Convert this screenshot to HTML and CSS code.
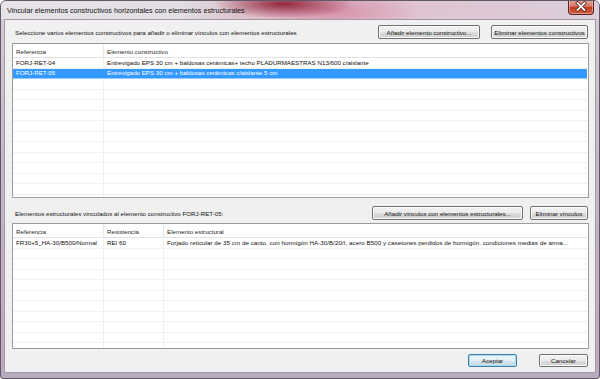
FILE: index.html
```html
<!DOCTYPE html>
<html>
<head>
<meta charset="utf-8">
<link rel="stylesheet" href="styles.css">
</head>
<body>
<div class="window">
  <div class="titlebar">
    <span class="title">Vincular elementos constructivos horizontales con elementos estructurales</span>
    <div class="close">
      <svg width="26" height="15" viewBox="0 0 26 15">
        <path d="M9.5 4 L16.5 11 M16.5 4 L9.5 11" stroke="#5a1010" stroke-width="3.2" stroke-linecap="square"/>
        <path d="M9.5 4 L16.5 11 M16.5 4 L9.5 11" stroke="#ffffff" stroke-width="1.8" stroke-linecap="square"/>
      </svg>
    </div>
  </div>
  <div class="client">
    <div class="row toprow">
      <span class="label">Seleccione varios elementos constructivos para añadir o eliminar vínculos con elementos estructurales</span>
      <div class="btns">
        <button class="btn w-add">Añadir elemento constructivo...</button>
        <button class="btn w-del">Eliminar elementos constructivos</button>
      </div>
    </div>
    <div class="list list1">
      <div class="lrow head">
        <div class="cell c1">Referencia</div>
        <div class="cell cx">Elemento constructivo</div>
      </div>
      <div class="lrow">
        <div class="cell c1">FORJ-RET-04</div>
        <div class="cell cx">Entrevigado EPS 30 cm + baldosas cerámicas+ techo PLADURMAESTRAS N13/600 c/aislante</div>
      </div>
      <div class="lrow sel">
        <div class="cell c1">FORJ-RET-05</div>
        <div class="cell cx">Entrevigado EPS 30 cm + baldosas cerámicas c/aislante 5 cm</div>
      </div>
      <div class="lrow"><div class="cell c1"></div><div class="cell cx"></div></div>
      <div class="lrow"><div class="cell c1"></div><div class="cell cx"></div></div>
      <div class="lrow"><div class="cell c1"></div><div class="cell cx"></div></div>
      <div class="lrow"><div class="cell c1"></div><div class="cell cx"></div></div>
      <div class="lrow"><div class="cell c1"></div><div class="cell cx"></div></div>
      <div class="lrow"><div class="cell c1"></div><div class="cell cx"></div></div>
      <div class="lrow"><div class="cell c1"></div><div class="cell cx"></div></div>
      <div class="lrow"><div class="cell c1"></div><div class="cell cx"></div></div>
      <div class="lrow"><div class="cell c1"></div><div class="cell cx"></div></div>
      <div class="lrow"><div class="cell c1"></div><div class="cell cx"></div></div>
      <div class="lrow"><div class="cell c1"></div><div class="cell cx"></div></div>
      <div class="lrow"><div class="cell c1"></div><div class="cell cx"></div></div>
    </div>
    <div class="row midrow">
      <span class="label">Elementos estructurales vinculados al elemento constructivo FORJ-RET-05:</span>
      <div class="btns">
        <button class="btn w-addv">Añadir vínculos con elementos estructurales...</button>
        <button class="btn w-delv">Eliminar vínculos</button>
      </div>
    </div>
    <div class="list list2">
      <div class="lrow head">
        <div class="cell c1">Referencia</div>
        <div class="cell c2">Resistencia</div>
        <div class="cell cx">Elemento estructural</div>
      </div>
      <div class="lrow">
        <div class="cell c1">FR30+5_HA-30/B500/Normal</div>
        <div class="cell c2">REI 60</div>
        <div class="cell cx wide">Forjado reticular de 35 cm de canto, con hormigón HA-30/B/20/I, acero B500 y casetones perdidos de hormigón, condiciones medias de arma...</div>
      </div>
      <div class="lrow"><div class="cell c1"></div><div class="cell c2"></div><div class="cell cx"></div></div>
      <div class="lrow"><div class="cell c1"></div><div class="cell c2"></div><div class="cell cx"></div></div>
      <div class="lrow"><div class="cell c1"></div><div class="cell c2"></div><div class="cell cx"></div></div>
      <div class="lrow"><div class="cell c1"></div><div class="cell c2"></div><div class="cell cx"></div></div>
      <div class="lrow"><div class="cell c1"></div><div class="cell c2"></div><div class="cell cx"></div></div>
      <div class="lrow"><div class="cell c1"></div><div class="cell c2"></div><div class="cell cx"></div></div>
      <div class="lrow"><div class="cell c1"></div><div class="cell c2"></div><div class="cell cx"></div></div>
      <div class="lrow"><div class="cell c1"></div><div class="cell c2"></div><div class="cell cx"></div></div>
      <div class="lrow"><div class="cell c1"></div><div class="cell c2"></div><div class="cell cx"></div></div>
      <div class="lrow"><div class="cell c1"></div><div class="cell c2"></div><div class="cell cx"></div></div>
    </div>
    <div class="row bottomrow">
      <div class="btns">
        <button class="btn w-ok default">Aceptar</button>
        <button class="btn w-ok">Cancelar</button>
      </div>
    </div>
  </div>
</div>
</body>
</html>
```

FILE: styles.css
```css
html, body {
  margin: 0;
  padding: 0;
}
body {
  width: 600px;
  height: 379px;
  overflow: hidden;
  background: #ffffff;
  font-family: "Liberation Sans", Arial, sans-serif;
  color: #000;
}
.window {
  width: 600px;
  height: 379px;
  box-sizing: border-box;
  border: 1px solid #5f5866;
  border-radius: 6px 6px 3px 3px;
  background: linear-gradient(180deg, #d6ccd6 0%, #c6b9c8 40%, #b9aabd 100%);
  display: flex;
  flex-direction: column;
  overflow: hidden;
}
.titlebar {
  height: 18px;
  flex: none;
  display: flex;
  align-items: center;
  justify-content: space-between;
  background:
    radial-gradient(ellipse 70px 14px at 282px 3px, rgba(135, 15, 38, 0.85), rgba(135, 15, 38, 0) 100%),
    radial-gradient(ellipse 90px 20px at 330px 10px, rgba(205, 100, 135, 0.55), rgba(205, 100, 135, 0) 100%),
    linear-gradient(90deg, #e7e4e8 0%, #e2dee3 30%, #dcc2cc 40%, #e0c2cf 62%, #dccedb 100%);
}
.title {
  font-size: 7.2px;
  padding-left: 6px;
  color: #111;
  white-space: nowrap;
}
.close {
  width: 26px;
  height: 15px;
  align-self: flex-start;
  margin-right: 5px;
  margin-top: -1px;
  box-sizing: border-box;
  border: 1px solid #5b2020;
  border-top: none;
  border-radius: 0 0 4px 4px;
  background: linear-gradient(180deg, #e8a89a 0%, #d27a68 45%, #c03a22 50%, #d06040 100%);
  box-shadow: inset 0 0 0 1px rgba(255, 210, 200, 0.5);
}
.close svg {
  display: block;
  margin: -1px 0 0 -1px;
}
.client {
  flex: 1;
  margin: 0 3px 5px 3px;
  border: 1px solid #a597a8;
  background: #f0f0f0;
  display: flex;
  flex-direction: column;
  padding: 5px 6px 0 7px;
  font-size: 6.2px;
}
.row {
  display: flex;
  align-items: center;
  justify-content: space-between;
  flex: none;
}
.toprow {
  height: 14px;
  margin-bottom: 4px;
}
.midrow {
  height: 14px;
  margin-top: 8px;
  margin-bottom: 3px;
}
.bottomrow {
  height: 13px;
  margin-top: 5px;
  justify-content: flex-end;
}
.label {
  padding-left: 3px;
  white-space: nowrap;
  color: #111;
}
.btns {
  display: flex;
  height: 100%;
  margin-right: 1px;
}
.btn {
  box-sizing: border-box;
  height: 100%;
  margin: 0 0 0 10px;
  padding: 0;
  font-family: inherit;
  font-size: 6.2px;
  color: #111;
  border: 1px solid #707070;
  border-radius: 2px;
  background: linear-gradient(180deg, #f2f2f2 0%, #ebebeb 50%, #dddddd 51%, #cfcfcf 100%);
  box-shadow: inset 0 0 0 1px #fbfbfb;
  white-space: nowrap;
}
.w-add { width: 102px; }
.w-del { width: 97px; margin-left: 11px; }
.w-addv { width: 151px; }
.w-delv { width: 58px; margin-left: 7px; }
.w-ok { width: 49px; margin-left: 22px; }
.btn.default {
  border-color: #3c7fb1;
  box-shadow: inset 0 0 0 1px #a6dcf5;
  background: linear-gradient(180deg, #eef5f9 0%, #e4eef4 50%, #d4e4ee 51%, #c8dbe6 100%);
}
.list {
  flex: none;
  box-sizing: border-box;
  border: 1px solid #9c9ca4;
  background: #ffffff;
  overflow: hidden;
  width: 577px;
}
.list1 { height: 155px; }
.list2 { height: 126px; }
.lrow {
  display: flex;
  height: 10.5px;
  box-sizing: border-box;
  border-bottom: 1px solid #f1f1f1;
}
.lrow.head {
  height: 14px;
  border-bottom: 1px solid #e3e3e3;
  align-items: stretch;
}
.cell {
  box-sizing: border-box;
  padding-left: 3px;
  white-space: nowrap;
  overflow: hidden;
  display: flex;
  align-items: center;
  border-right: 1px solid #f1f1f1;
  line-height: 1;
  color: #111;
}
.head .cell {
  padding-top: 4px;
  border-right: 1px solid #e8e8e8;
  color: #2a2a2a;
}
.c1 { width: 91px; flex: none; }
.c2 { width: 60px; flex: none; }
.cx { flex: 1; border-right: none; }
.cx.wide { letter-spacing: 0.05px; }
.head .cx { border-right: none; }
.lrow.sel {
  background: #3399ff;
  margin-right: 1px;
  border-bottom: 1px solid #99ccff;
}
.sel .cell { border-right-color: #3399ff; color: #ffffff; }
```
